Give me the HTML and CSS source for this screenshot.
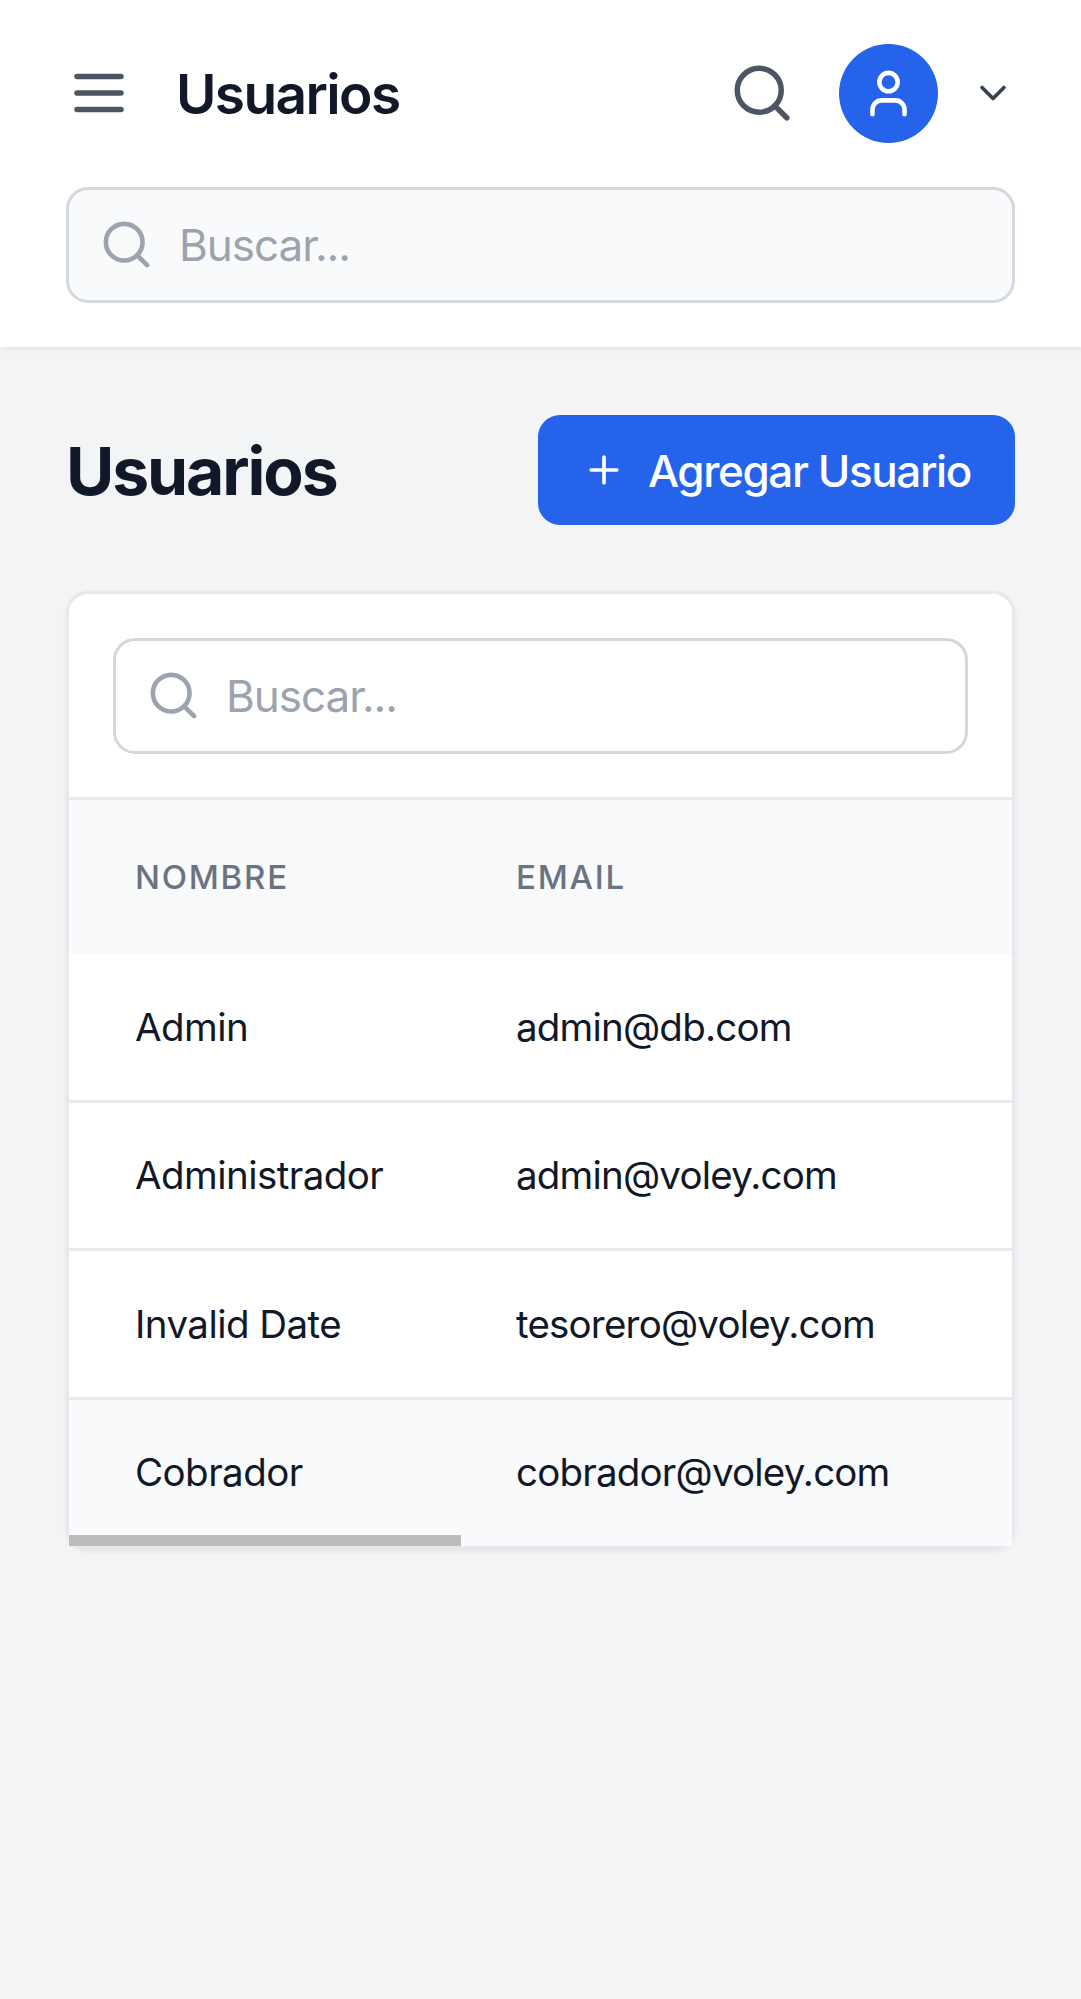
FILE: index.html
```html
<!DOCTYPE html>
<html lang="es">
<head>
<meta charset="utf-8">
<title>Usuarios</title>
<link rel="stylesheet" href="styles.css">
</head>
<body>
<header class="topbar">
  <div class="topbar-row">
    <button class="icon-button" aria-label="Menú">
      <svg class="icon icon-lg" viewBox="0 0 24 24"><path d="M4 6h16M4 12h16M4 18h16"/></svg>
    </button>
    <h1 class="topbar-title">Usuarios</h1>
    <div class="topbar-actions">
      <button class="icon-button" aria-label="Buscar">
        <svg class="icon icon-lg" viewBox="0 0 24 24"><circle cx="11" cy="11" r="8"/><path d="m21 21-4.3-4.3"/></svg>
      </button>
      <button class="account" aria-label="Cuenta">
        <span class="avatar">
          <svg class="icon icon-md" viewBox="0 0 24 24"><path d="M19 21v-2a4 4 0 0 0-4-4H9a4 4 0 0 0-4 4v2"/><circle cx="12" cy="7" r="4"/></svg>
        </span>
        <svg class="icon icon-sm" viewBox="0 0 24 24"><path d="m6 9 6 6 6-6"/></svg>
      </button>
    </div>
  </div>
  <label class="search search-muted">
    <svg class="icon icon-md" viewBox="0 0 24 24"><circle cx="11" cy="11" r="8"/><path d="m21 21-4.3-4.3"/></svg>
    <input class="search-input" type="text" placeholder="Buscar...">
  </label>
</header>
<main class="content">
  <div class="page-head">
    <h2 class="page-title">Usuarios</h2>
    <button class="add-button">
      <svg class="icon icon-sm" viewBox="0 0 24 24"><path d="M5 12h14M12 5v14"/></svg>
      <span class="add-label">Agregar Usuario</span>
    </button>
  </div>
  <section class="card">
    <div class="card-search">
      <label class="search">
        <svg class="icon icon-md" viewBox="0 0 24 24"><circle cx="11" cy="11" r="8"/><path d="m21 21-4.3-4.3"/></svg>
        <input class="search-input" type="text" placeholder="Buscar...">
      </label>
    </div>
    <div class="table-wrap">
      <table class="table">
        <thead>
          <tr><th class="col-name">Nombre</th><th class="col-email">Email</th></tr>
        </thead>
        <tbody>
          <tr><td>Admin</td><td class="email">admin@db.com</td></tr>
          <tr class="row-short"><td>Administrador</td><td class="email">admin@voley.com</td></tr>
          <tr><td>Invalid Date</td><td class="email">tesorero@voley.com</td></tr>
          <tr class="row-active"><td>Cobrador</td><td class="email">cobrador@voley.com</td></tr>
        </tbody>
      </table>
      <div class="scroll-thumb"></div>
    </div>
  </section>
</main>
</body>
</html>
```
FILE: styles.css
```css
*, *::before, *::after { box-sizing: border-box; }

body {
  margin: 0;
  min-height: 1999px;
  background: #f3f4f6;
  color: #111827;
  font-family: Inter, "Liberation Sans", sans-serif;
}

h1, h2 { margin: 0; }

button {
  border: 0;
  padding: 0;
  background: none;
  color: inherit;
  font: inherit;
}

.icon {
  display: block;
  flex: none;
  fill: none;
  stroke: currentColor;
  stroke-width: 2;
  stroke-linecap: round;
  stroke-linejoin: round;
}
.icon-lg { width: 66px; height: 66px; }
.icon-md { width: 55px; height: 55px; }
.icon-sm { width: 44px; height: 44px; }

/* Top bar */
.topbar {
  height: 346.5px;
  padding: 38px 66px 0;
  background: #fff;
  box-shadow: 0 2.75px 5.5px rgba(0, 0, 0, .07);
}
.topbar-row {
  display: flex;
  align-items: center;
  height: 110px;
}
.icon-button { padding: 22px; color: #4b5563; }
.topbar-row > .icon-button { margin-left: -22px; }
.topbar-title {
  margin-left: 22px;
  padding-top: 2px;
  font-size: 55px;
  font-weight: 600;
  line-height: 77px;
  letter-spacing: -1.6px;
}
.topbar-actions {
  display: flex;
  align-items: center;
  gap: 22px;
  margin-left: auto;
}
.account {
  display: flex;
  align-items: center;
  gap: 33px;
  color: #374151;
}
.avatar {
  display: flex;
  align-items: center;
  justify-content: center;
  width: 99px;
  height: 99px;
  border-radius: 50%;
  background: #2563eb;
  color: #fff;
}

/* Search fields */
.search {
  display: flex;
  align-items: center;
  gap: 25px;
  height: 116px;
  padding: 0 31px 1px 30px;
  border: 3px solid #d3d7de;
  border-radius: 22px;
  background: #fff;
  color: #9ca3af;
}
.search-muted { margin-top: 39px; background: #f9fafb; }
.search-input {
  flex: 1;
  min-width: 0;
  padding: 1px 0 0;
  border: 0;
  outline: 0;
  background: none;
  font: 400 44px/66px Inter, "Liberation Sans", sans-serif;
  letter-spacing: -1.03px;
}
.search-input::placeholder { color: #9ca3af; opacity: 1; }

/* Page */
.content { padding: 68.5px 66px 0; }
.page-head {
  display: flex;
  align-items: center;
  justify-content: space-between;
  height: 110px;
}
.page-title {
  padding-top: 2px;
  font-size: 66px;
  font-weight: 700;
  line-height: 88px;
  letter-spacing: -2.1px;
}
.add-button {
  display: flex;
  align-items: center;
  gap: 22px;
  height: 110px;
  padding: 0 44px;
  border-radius: 22px;
  background: #2563eb;
  color: #fff;
  font-size: 44px;
  font-weight: 500;
  letter-spacing: -1.4px;
  white-space: nowrap;
}
.add-label { padding-top: 2px; }

/* Users card */
.card {
  margin-top: 66px;
  border: 3px solid #e6e8ec;
  border-radius: 22px;
  background: #fff;
  box-shadow: 0 2.75px 5.5px rgba(0, 0, 0, .06);
}
.card-search {
  padding: 44px 44px 43px;
  border-bottom: 3px solid #e8eaed;
}
.table-wrap { position: relative; }
.table {
  width: 100%;
  border-collapse: separate;
  border-spacing: 0;
  table-layout: fixed;
}
.table th {
  height: 154px;
  padding: 0 66px;
  background: #f9fafb;
  color: #6b7280;
  font-size: 33px;
  font-weight: 500;
  letter-spacing: 1.75px;
  text-align: left;
  text-transform: uppercase;
}
.col-name { width: 381px; }
.table td {
  height: 149px;
  padding: 0 0 0 66px;
  border-bottom: 3px solid #e8eaed;
  background: #fff;
  font-size: 38.5px;
  line-height: 55px;
  letter-spacing: -.55px;
  white-space: nowrap;
}
.table .row-short td { height: 148px; }
.table .email { letter-spacing: -.8px; }
.table .row-active td {
  height: 146px;
  padding-bottom: 2px;
  border-bottom: 0;
  background: #f9fafb;
}

/* Horizontal scrollbar thumb laid over the last row */
.scroll-thumb {
  position: absolute;
  left: 0;
  bottom: 0;
  width: 392px;
  height: 11px;
  background: #bbbdbc;
}
```
